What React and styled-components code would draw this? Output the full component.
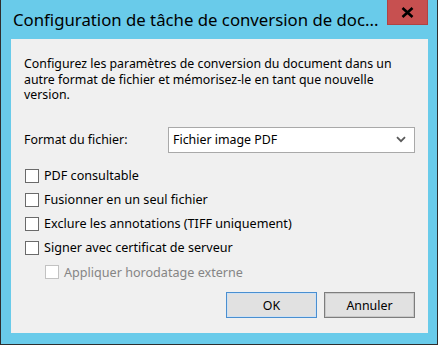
import React from "react";
import styled, { createGlobalStyle } from "styled-components";

const Global = createGlobalStyle`
  html, body { margin: 0; padding: 0; background: #f0f0f0; }
  * { box-sizing: border-box; }
  body { font-family: "Noto Sans", "Open Sans", sans-serif; }
`;

const Window = styled.div`
  width: 438px;
  height: 345px;
  background: #69cbea;
  border: 1px solid #2e2e2e;
  border-top: none;
  display: flex;
  flex-direction: column;
`;

const TitleBar = styled.div`
  height: 39px;
  display: flex;
  align-items: flex-start;
  padding-left: 12px;
  padding-right: 9px;
  flex-shrink: 0;
`;

const Title = styled.div`
  flex: 1;
  font-family: "Noto Sans", sans-serif;
  font-size: 16.75px;
  line-height: 24px;
  padding-top: 8px;
  color: #000;
  white-space: nowrap;
  overflow: hidden;
`;

const CloseButton = styled.div`
  width: 41px;
  height: 25px;
  background: #c75050;
  border: 1px solid #b04343;
  border-top: none;
  display: flex;
  align-items: center;
  justify-content: center;
`;

const Client = styled.div`
  margin: 0 9px 0 10px;
  height: 294px;
  background: #f0f0f0;
  padding: 17px 13px 15px 13px;
  display: flex;
  flex-direction: column;
`;

const Description = styled.p`
  margin: 0;
  font-size: 12.35px;
  line-height: 15.5px;
  color: #000;
`;

const FormatRow = styled.div`
  margin-top: 24px;
  display: flex;
  align-items: center;
  height: 26px;
`;

const Label = styled.div`
  width: 144px;
  font-size: 12.4px;
  color: #000;
`;

const Select = styled.div`
  flex: 1;
  height: 26px;
  background: #fff;
  border: 1px solid #a9a9a9;
  display: flex;
  align-items: center;
  justify-content: space-between;
  padding: 0 8px 0 4px;
  font-size: 12.4px;
  color: #000;
`;

const CheckList = styled.div`
  margin-top: 11px;
  display: flex;
  flex-direction: column;
`;

const CheckRow = styled.div`
  height: ${(p) => (p.$sub ? 25 : 24)}px;
  display: flex;
  align-items: center;
  padding-left: ${(p) => (p.$indent ? 21 : 1)}px;
  font-size: 12.6px;
  color: ${(p) => (p.$disabled ? "#858585" : "#000")};
`;

const Box = styled.span`
  width: 14px;
  height: 14px;
  background: #fff;
  border: 1px solid ${(p) => (p.$disabled ? "#c2c2c2" : "#6a6a6a")};
  margin-right: 5px;
  flex-shrink: 0;
`;

const Buttons = styled.div`
  margin-top: auto;
  display: flex;
  justify-content: flex-end;
  gap: 7px;
`;

const Button = styled.div`
  width: 91px;
  height: 26px;
  background: #e1e1e1;
  border: 1px solid ${(p) => (p.$default ? "#4a8fd0" : "#7d7d7d")};
  box-shadow: inset 0 0 0 1px ${(p) => (p.$default ? "#cfe1f3" : "#c9c9c9")};
  display: flex;
  align-items: center;
  justify-content: center;
  font-size: 12.4px;
  color: #000;
`;

const Checkbox = ({ label, indent, disabled }) => (
  <CheckRow $indent={indent} $sub={indent} $disabled={disabled}>
    <Box $disabled={disabled} />
    {label}
  </CheckRow>
);

export default function App() {
  return (
    <>
      <Global />
      <Window>
        <TitleBar>
          <Title>Configuration de tâche de conversion de doc...</Title>
          <CloseButton>
            <svg width="13" height="11" viewBox="0 0 13 11">
              <path d="M1.5 1 L11.5 10 M11.5 1 L1.5 10" stroke="#000" strokeWidth="2.6" />
            </svg>
          </CloseButton>
        </TitleBar>
        <Client>
          <Description>
            Configurez les paramètres de conversion du document dans un
            <br />
            autre format de fichier et mémorisez-le en tant que nouvelle
            <br />
            version.
          </Description>
          <FormatRow>
            <Label>Format du fichier:</Label>
            <Select>
              <span>Fichier image PDF</span>
              <svg width="10" height="7" viewBox="0 0 10 7">
                <path d="M1 1.2 L5 5.2 L9 1.2" fill="none" stroke="#5a5a5a" strokeWidth="1.8" />
              </svg>
            </Select>
          </FormatRow>
          <CheckList>
            <Checkbox label="PDF consultable" />
            <Checkbox label="Fusionner en un seul fichier" />
            <Checkbox label="Exclure les annotations (TIFF uniquement)" />
            <Checkbox label="Signer avec certificat de serveur" />
            <Checkbox label="Appliquer horodatage externe" indent disabled />
          </CheckList>
          <Buttons>
            <Button $default>OK</Button>
            <Button>Annuler</Button>
          </Buttons>
        </Client>
      </Window>
    </>
  );
}
